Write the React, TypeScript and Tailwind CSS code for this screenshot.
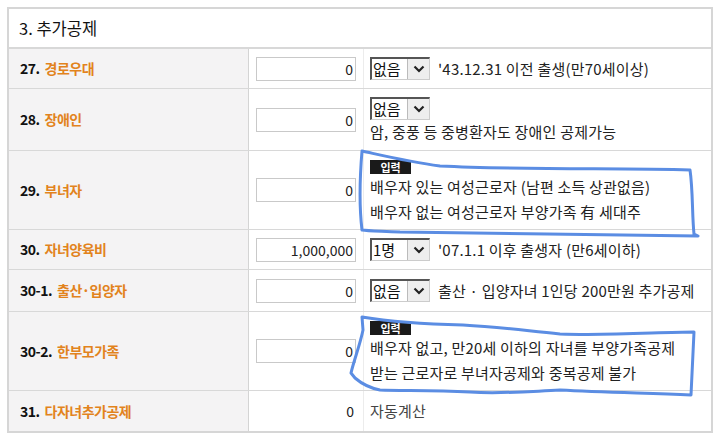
import React from "react";

const FONT = { fontFamily: '"Noto Sans CJK KR", "Noto Sans", sans-serif' };

function NumInput({ value }: { value: string }) {
  return (
    <div className="w-[100px] h-[24px] border border-[#c9c9c9] bg-white flex items-center justify-end pr-[2px] text-[14px] text-[#222] leading-none">
      {value}
    </div>
  );
}

function Select({ label }: { label: string }) {
  return (
    <div className="flex w-[60px] h-[23px] border-l-2 border-t-2 border-[#555] border-r border-b border-r-[#ccc] border-b-[#ccc] bg-white shrink-0">
      <div className="flex-1 text-[15px] leading-[19px] tracking-normal pl-[1px] text-[#111] whitespace-nowrap">{label}</div>
      <div className="w-[22px] h-full bg-[#eeeeee] border-l border-[#bbb] flex items-center justify-center">
        <svg width="12" height="8" viewBox="0 0 12 8">
          <path d="M1.5 1.5 L6 6 L10.5 1.5" stroke="#222" strokeWidth="2.2" fill="none" />
        </svg>
      </div>
    </div>
  );
}

function Badge() {
  return (
    <div className="w-[41px] h-[14px] bg-[#1a1a1a] text-white text-[11px] font-bold leading-[14px] tracking-normal text-center">
      입력
    </div>
  );
}

function Label({ num, name }: { num: string; name: string }) {
  return (
    <div className="bg-[#f4f3f4] border-r border-[#d4d4d4] flex items-center pl-[11px] text-[14px] font-bold tracking-[-0.5px]">
      <span className="text-[#111]">{num}</span>
      <span className="text-[#e2831d] ml-[5px]">{name}</span>
    </div>
  );
}

function Row({
  h,
  num,
  name,
  value,
  children,
  last,
}: {
  h: string;
  num: string;
  name: string;
  value: React.ReactNode;
  children: React.ReactNode;
  last?: boolean;
}) {
  return (
    <div className={`grid grid-cols-[240px_115px_1fr] ${h} ${last ? "" : "border-b border-[#d8d8d8]"}`}>
      <Label num={num} name={name} />
      <div className="flex items-center pl-[7px] border-r border-[#ececec]">{value}</div>
      <div className="flex flex-col justify-center pl-[6px] text-[15px] tracking-[0.2px] text-[#222] leading-[22px] whitespace-nowrap">
        {children}
      </div>
    </div>
  );
}

export default function App() {
  return (
    <div className="relative w-[720px] h-[441px] bg-white overflow-hidden" style={FONT}>
      <div className="pt-[7px] pl-[7px]">
        <div className="w-[706px] border-2 border-[#d6d6d6] bg-white">
          <div className="h-[40px] border-b-2 border-[#d8d8d8] flex items-center pl-[10px] text-[16.5px] text-[#111]">
            3. 추가공제
          </div>
          <Row h="h-[40px]" num="27." name="경로우대" value={<NumInput value="0" />}>
            <div className="flex items-center gap-[8px]">
              <Select label="없음" />
              <span>'43.12.31 이전 출생(만70세이상)</span>
            </div>
          </Row>
          <Row h="h-[62px]" num="28." name="장애인" value={<NumInput value="0" />}>
            <div className="flex flex-col">
              <Select label="없음" />
              <span className="mt-[1px]">암, 중풍 등 중병환자도 장애인 공제가능</span>
            </div>
          </Row>
          <Row h="h-[79px]" num="29." name="부녀자" value={<NumInput value="0" />}>
            <div className="flex flex-col pt-[2px]">
              <Badge />
              <span className="mt-[2px]">배우자 있는 여성근로자 (남편 소득 상관없음)</span>
              <span className="mt-[3px]">배우자 없는 여성근로자 부양가족 有 세대주</span>
            </div>
          </Row>
          <Row h="h-[40px]" num="30." name="자녀양육비" value={<NumInput value="1,000,000" />}>
            <div className="flex items-center gap-[8px]">
              <Select label="1명" />
              <span>'07.1.1 이후 출생자 (만6세이하)</span>
            </div>
          </Row>
          <Row h="h-[42px]" num="30-1." name="출산·입양자" value={<NumInput value="0" />}>
            <div className="flex items-center gap-[8px]">
              <Select label="없음" />
              <span>출산 · 입양자녀 1인당 200만원 추가공제</span>
            </div>
          </Row>
          <Row h="h-[79px]" num="30-2." name="한부모가족" value={<NumInput value="0" />}>
            <div className="flex flex-col pt-[2px]">
              <Badge />
              <span className="mt-[2px]">배우자 없고, 만20세 이하의 자녀를 부양가족공제</span>
              <span className="mt-[3px]">받는 근로자로 부녀자공제와 중복공제 불가</span>
            </div>
          </Row>
          <Row
            h="h-[40px]"
            num="31."
            name="다자녀추가공제"
            last
            value={<div className="w-[100px] text-right pr-[2px] text-[14px] text-[#222]">0</div>}
          >
            <span className="text-[#444]">자동계산</span>
          </Row>
        </div>
      </div>
      <svg className="absolute left-0 top-0 pointer-events-none" width="720" height="441" viewBox="0 0 720 441">
        <path
          d="M362 151 C 385 156, 410 162, 440 166 C 520 170, 620 168, 690 170 C 693 190, 692 215, 694 234 L 698 236 C 620 235, 480 233, 400 232 C 380 231, 368 231, 362 230 C 359 205, 360 175, 362 151 Z"
          fill="none"
          stroke="#5b8de3"
          strokeWidth="3"
          strokeLinejoin="round"
          strokeLinecap="round"
        />
        <path
          d="M362 317 C 380 320, 420 324, 463 325 C 500 327, 520 330, 560 334 C 610 336, 660 332, 694 332 C 693 355, 692 375, 691 395 C 640 393, 600 392, 560 390 C 520 392, 500 394, 470 392 C 430 390, 400 391, 380 390 C 370 388, 362 384, 355 378 L 351 373 C 354 360, 360 345, 363 330 Z"
          fill="none"
          stroke="#5b8de3"
          strokeWidth="3"
          strokeLinejoin="round"
          strokeLinecap="round"
        />
      </svg>
    </div>
  );
}
